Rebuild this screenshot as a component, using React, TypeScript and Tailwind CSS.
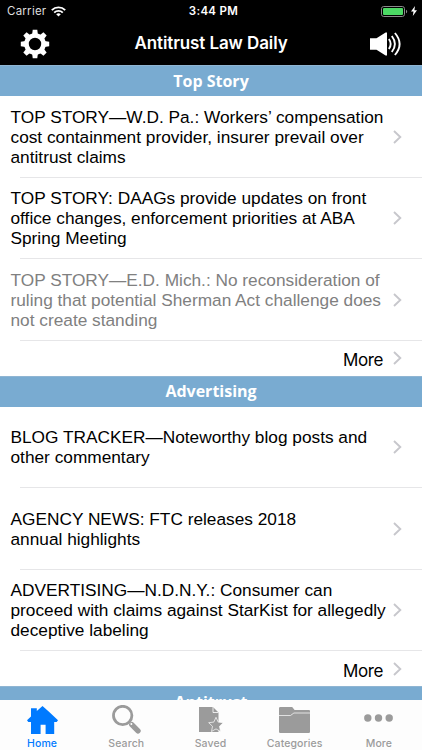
import { clsx } from 'clsx';
import type { ReactNode } from 'react';

interface Story {
  lines: string[];
  read?: boolean;
}

interface Section {
  title: string;
  stories: Story[];
}

const sections: Section[] = [
  {
    title: 'Top Story',
    stories: [
      {
        lines: [
          'TOP STORY—W.D. Pa.: Workers’ compensation',
          'cost containment provider, insurer prevail over',
          'antitrust claims',
        ],
      },
      {
        lines: [
          'TOP STORY: DAAGs provide updates on front',
          'office changes, enforcement priorities at ABA',
          'Spring Meeting',
        ],
      },
      {
        lines: [
          'TOP STORY—E.D. Mich.: No reconsideration of',
          'ruling that potential Sherman Act challenge does',
          'not create standing',
        ],
        read: true,
      },
    ],
  },
  {
    title: 'Advertising',
    stories: [
      { lines: ['BLOG TRACKER—Noteworthy blog posts and', 'other commentary'] },
      { lines: ['AGENCY NEWS: FTC releases 2018', 'annual highlights'] },
      {
        lines: [
          'ADVERTISING—N.D.N.Y.: Consumer can',
          'proceed with claims against StarKist for allegedly',
          'deceptive labeling',
        ],
      },
    ],
  },
];

const Chevron = () => (
  <svg className="h-[14px] w-[9px] shrink-0" viewBox="0 0 9 14" fill="none" stroke="#c7c7cc" strokeWidth="1.9">
    <path d="M1 1l6.3 6L1 13" />
  </svg>
);

const StatusBar = () => (
  <div className="flex h-[22px] items-center justify-between pl-[7px] pr-[5px] text-[11.5px] text-white">
    <div className="flex w-[120px] items-center gap-[5px] pt-px tracking-[0.25px]">
      <span className="text-[#dedede]">Carrier</span>
      <svg className="h-[11px] w-[15px]" viewBox="0 0 15 11" fill="none" stroke="#fff" strokeWidth="1.9">
        <path d="M.8 4.1a9.6 9.6 0 0 1 13.4 0" />
        <path d="M3.2 6.6a6.2 6.2 0 0 1 8.6 0" />
        <path d="M7.5 10.6L5.2 8.3a3.3 3.3 0 0 1 4.6 0z" fill="#fff" stroke="none" />
      </svg>
    </div>
    <span className="pt-px pl-[3px] font-semibold tracking-[0.3px]">3:44 PM</span>
    <div className="flex w-[120px] items-center justify-end gap-[3px]">
      <svg className="h-[11px] w-[27px]" viewBox="0 0 27 11">
        <rect x=".5" y=".5" width="23" height="10" rx="2.2" fill="none" stroke="#8a8a8a" />
        <rect x="2" y="2" width="20" height="7" rx="1" fill="#4cd964" />
        <path d="M25 3.7c1.6.5 1.6 3.1 0 3.6z" fill="#8a8a8a" />
      </svg>
      <svg className="h-[10px] w-[6px]" viewBox="0 0 6 10" fill="#fff">
        <path d="M4 0L0 5.6h2.5L1.8 10 6 4.2H3.4z" />
      </svg>
    </div>
  </div>
);

const gearTeeth = [0, 45, 90, 135, 180, 225, 270, 315];

const GearIcon = () => (
  <svg className="h-[30px] w-[30px]" viewBox="-15 -15 30 30" fill="#fff">
    <circle r="8.5" fill="none" stroke="#fff" strokeWidth="4.6" />
    {gearTeeth.map((angle) => (
      <path key={angle} d="M-2.9 -9.5L-2.3 -14.2H2.3L2.9 -9.5z" transform={`rotate(${angle})`} />
    ))}
  </svg>
);

const SpeakerIcon = () => (
  <svg className="h-[24px] w-[31px]" viewBox="0 0 31 24" fill="none" stroke="#fff" strokeWidth="1.9">
    <path d="M0 6.3h6.5L15.6 .5h1.4v23h-1.4L6.5 17.7H0z" fill="#fff" stroke="none" />
    <path d="M18.9 7q3.5 5 0 10" />
    <path d="M21.8 4q6.2 8 0 16" />
    <path d="M24.9 1q9.4 11 0 22" />
  </svg>
);

const Header = () => (
  <header className="h-[65px] bg-black">
    <StatusBar />
    <div className="flex h-[43px] items-center justify-between pl-5 pr-[21px]">
      <GearIcon />
      <h1 className="pl-[2px] text-[17px] leading-none font-semibold tracking-[-0.1px] text-white">
        Antitrust Law Daily
      </h1>
      <SpeakerIcon />
    </div>
  </header>
);

const SectionBand = ({ title }: { title: string }) => (
  <h2 className="flex h-[31px] items-center justify-center border-t border-[#8fb5d3] bg-[#79abd1] pb-px font-['Open_Sans'] text-[16px] font-bold text-white">
    {title}
  </h2>
);

const StoryRow = ({ story }: { story: Story }) => (
  <li className="h-[81.5px]">
    <div className="flex h-[80.5px] items-center justify-between pt-px pl-[10.5px] pr-[20px]">
      <p
        className={clsx(
          "font-['Liberation_Sans'] text-[17.28px] leading-[20px] whitespace-nowrap",
          story.read ? 'text-[#808080]' : 'text-black'
        )}
      >
        {story.lines.map((line) => (
          <span key={line} className="block">
            {line}
          </span>
        ))}
      </p>
      <Chevron />
    </div>
    <div className="ml-5 h-px bg-[#e6e6e8]" />
  </li>
);

const MoreRow = () => (
  <div className="flex h-[35px] items-center justify-end gap-[10px] pr-[20px] text-[17px]">
    <span className="pt-[5px] leading-none tracking-[-0.4px]">More</span>
    <Chevron />
  </div>
);

const HomeIcon = () => (
  <svg className="h-[28px] w-[31px]" viewBox="0 0 31 28" fill="currentColor">
    <path d="M15.5 0l6.2 5.6L31 14.2l-1.3 1.9h-2.5V28h-8.6v-9.3h-5V28H4V16.1H1.3L0 14.2l4-3.8V2.2h5.8v2.9z" />
  </svg>
);

const SearchIcon = () => (
  <svg className="h-[29px] w-[29px]" viewBox="0 0 29 29">
    <circle cx="10.7" cy="10.5" r="9.2" fill="none" stroke="currentColor" strokeWidth="2.8" />
    <path d="M19.8 19.6L26 25.8" stroke="currentColor" strokeWidth="5.4" strokeLinecap="round" />
    <circle cx="19.4" cy="19.1" r="1" fill="#fff" />
  </svg>
);

const SavedIcon = () => (
  <svg className="ml-px h-[26px] w-[24px]" viewBox="0 0 24 26" fill="currentColor">
    <path d="M0 0h14l5.5 5.5V25H0z" />
    <path d="M14 0v5.5h5.5" fill="none" stroke="#fff" strokeWidth=".8" />
    <path
      d="M17 10.3l2.2 4.8 5.1.6-3.8 3.6 1 5.2-4.5-2.6-4.5 2.6 1-5.2-3.8-3.6 5.1-.6z"
      stroke="#fff"
      strokeWidth=".7"
    />
  </svg>
);

const FolderIcon = () => (
  <svg className="h-[26px] w-[31px]" viewBox="0 0 31 26" fill="currentColor">
    <path d="M0 1.2Q0 0 1.2 0h12l2.4 3H30q1 0 1 1v20.8q0 1.2-1.2 1.2H1.2Q0 26 0 24.8z" />
    <path d="M0 8.5h11.5l3.4-2.5H31" fill="none" stroke="#fff" strokeWidth=".7" />
  </svg>
);

const DotsIcon = () => (
  <svg className="h-[8px] w-[29px]" viewBox="0 0 29 8" fill="currentColor">
    <circle cx="3.8" cy="4" r="3.7" />
    <circle cx="14.5" cy="4" r="3.7" />
    <circle cx="25.2" cy="4" r="3.7" />
  </svg>
);

const tabs: { label: string; icon: ReactNode; active?: boolean }[] = [
  { label: 'Home', icon: <HomeIcon />, active: true },
  { label: 'Search', icon: <SearchIcon /> },
  { label: 'Saved', icon: <SavedIcon /> },
  { label: 'Categories', icon: <FolderIcon /> },
  { label: 'More', icon: <DotsIcon /> },
];

const TabBar = () => (
  <nav className="grid h-[50px] shrink-0 grid-cols-5 bg-[#fdfdfd] pr-px">
    {tabs.map((tab) => (
      <div
        key={tab.label}
        className={clsx('flex flex-col items-center', tab.active ? 'text-[#007aff]' : 'text-[#9b9b9b]')}
      >
        <div className={clsx('flex h-[38px] items-center', tab.label === 'More' ? 'pb-[3px]' : 'pt-px')}>
          {tab.icon}
        </div>
        <span className="text-[10.5px] leading-[11px] font-medium tracking-[0.1px]">{tab.label}</span>
      </div>
    ))}
  </nav>
);

export default function App() {
  return (
    <div className="flex h-[750px] w-[422px] flex-col overflow-hidden bg-white font-['Inter'] text-black">
      <Header />
      <main className="min-h-0 flex-1 overflow-hidden">
        {sections.map((section) => (
          <section key={section.title}>
            <SectionBand title={section.title} />
            <ul>
              {section.stories.map((story) => (
                <StoryRow key={story.lines[0]} story={story} />
              ))}
            </ul>
            <MoreRow />
          </section>
        ))}
        <SectionBand title="Antitrust" />
      </main>
      <TabBar />
    </div>
  );
}
